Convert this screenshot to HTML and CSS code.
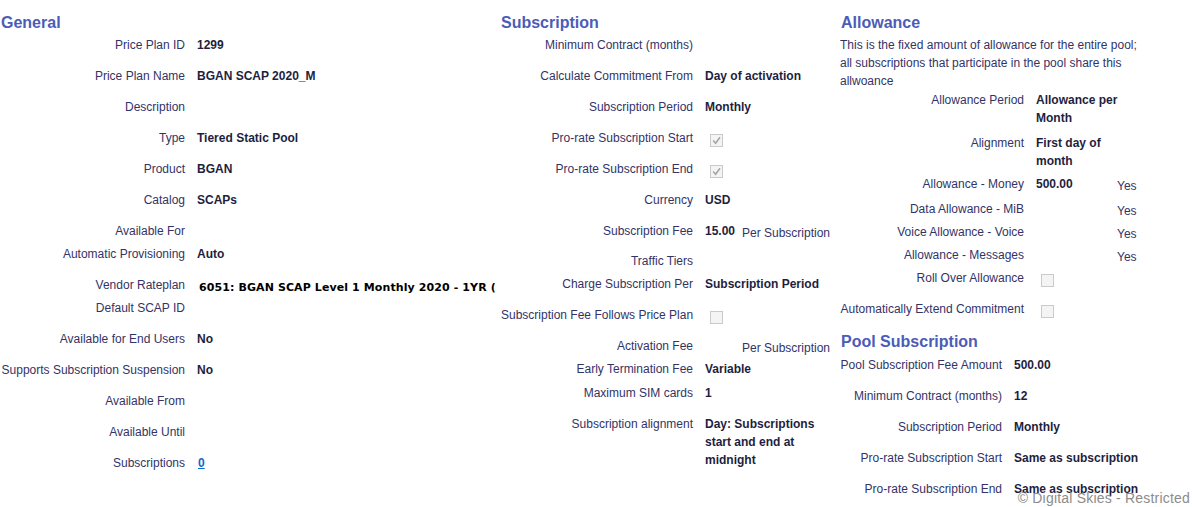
FILE: index.html
```html
<!DOCTYPE html>
<html>
<head>
<meta charset="utf-8">
<link rel="stylesheet" href="styles.css">
</head>
<body>
<div class="page">
  <section class="col col1">
    <h2 class="head">General</h2>
    <div class="row"><span class="lbl">Price Plan ID</span><span class="val">1299</span></div>
    <div class="row"><span class="lbl">Price Plan Name</span><span class="val">BGAN SCAP 2020_M</span></div>
    <div class="row"><span class="lbl">Description</span><span class="val"></span></div>
    <div class="row"><span class="lbl">Type</span><span class="val">Tiered Static Pool</span></div>
    <div class="row"><span class="lbl">Product</span><span class="val">BGAN</span></div>
    <div class="row"><span class="lbl">Catalog</span><span class="val">SCAPs</span></div>
    <div class="row tight"><span class="lbl">Available For</span><span class="val"></span></div>
    <div class="row"><span class="lbl">Automatic Provisioning</span><span class="val">Auto</span></div>
    <div class="row tight"><span class="lbl">Vendor Rateplan</span><span class="val vendor">6051: BGAN SCAP Level 1 Monthly 2020 - 1YR (</span></div>
    <div class="row"><span class="lbl">Default SCAP ID</span><span class="val"></span></div>
    <div class="row"><span class="lbl">Available for End Users</span><span class="val">No</span></div>
    <div class="row"><span class="lbl">Supports Subscription Suspension</span><span class="val">No</span></div>
    <div class="row"><span class="lbl">Available From</span><span class="val"></span></div>
    <div class="row"><span class="lbl">Available Until</span><span class="val"></span></div>
    <div class="row"><span class="lbl">Subscriptions</span><span class="val"><a class="link" href="#">0</a></span></div>
  </section>

  <section class="col col2">
    <h2 class="head">Subscription</h2>
    <div class="row"><span class="lbl">Minimum Contract (months)</span><span class="val"></span></div>
    <div class="row"><span class="lbl">Calculate Commitment From</span><span class="val">Day of activation</span></div>
    <div class="row"><span class="lbl">Subscription Period</span><span class="val">Monthly</span></div>
    <div class="row"><span class="lbl">Pro-rate Subscription Start</span><span class="val"><svg class="cb" width="13" height="13" viewBox="0 0 13 13"><rect x=".5" y=".5" width="12" height="12" fill="#f4f4f4" stroke="#cacaca"/><path d="M3.2 6.6l2.4 2.6L10 3.2" stroke="#a2a2a2" stroke-width="1.5" fill="none"/></svg></span></div>
    <div class="row"><span class="lbl">Pro-rate Subscription End</span><span class="val"><svg class="cb" width="13" height="13" viewBox="0 0 13 13"><rect x=".5" y=".5" width="12" height="12" fill="#f4f4f4" stroke="#cacaca"/><path d="M3.2 6.6l2.4 2.6L10 3.2" stroke="#a2a2a2" stroke-width="1.5" fill="none"/></svg></span></div>
    <div class="row"><span class="lbl">Currency</span><span class="val">USD</span></div>
    <div class="row m12"><span class="lbl">Subscription Fee</span><span class="val"><span class="amt">15.00</span><span class="unit">Per Subscription</span></span></div>
    <div class="row tight"><span class="lbl">Traffic Tiers</span><span class="val"></span></div>
    <div class="row"><span class="lbl">Charge Subscription Per</span><span class="val">Subscription Period</span></div>
    <div class="row"><span class="lbl">Subscription Fee Follows Price Plan</span><span class="val"><svg class="cb" width="13" height="13" viewBox="0 0 13 13"><rect x=".5" y=".5" width="12" height="12" fill="#f4f4f4" stroke="#cacaca"/></svg></span></div>
    <div class="row tight"><span class="lbl">Activation Fee</span><span class="val"><span class="amt"></span><span class="unit">Per Subscription</span></span></div>
    <div class="row m6"><span class="lbl">Early Termination Fee</span><span class="val">Variable</span></div>
    <div class="row"><span class="lbl">Maximum SIM cards</span><span class="val">1</span></div>
    <div class="row"><span class="lbl">Subscription alignment</span><span class="val wrap">Day: Subscriptions start and end at midnight</span></div>
  </section>

  <section class="col col3">
    <h2 class="head">Allowance</h2>
    <p class="desc">This is the fixed amount of allowance for the entire pool; all subscriptions that participate in the pool share this allwoance</p>
    <div class="row a m7"><span class="lbl">Allowance Period</span><span class="val">Allowance per Month</span></div>
    <div class="row a m5"><span class="lbl">Alignment</span><span class="val">First day of month</span></div>
    <div class="row ay m7"><span class="lbl">Allowance - Money</span><span class="val">500.00</span><span class="yes">Yes</span></div>
    <div class="row ay tight"><span class="lbl">Data Allowance - MiB</span><span class="val"></span><span class="yes">Yes</span></div>
    <div class="row ay tight"><span class="lbl">Voice Allowance - Voice</span><span class="val"></span><span class="yes">Yes</span></div>
    <div class="row ay tight"><span class="lbl">Allowance - Messages</span><span class="val"></span><span class="yes">Yes</span></div>
    <div class="row a"><span class="lbl">Roll Over Allowance</span><span class="val"><svg class="cb" width="13" height="13" viewBox="0 0 13 13"><rect x=".5" y=".5" width="12" height="12" fill="#f4f4f4" stroke="#cacaca"/></svg></span></div>
    <div class="row a"><span class="lbl">Automatically Extend Commitment</span><span class="val"><svg class="cb" width="13" height="13" viewBox="0 0 13 13"><rect x=".5" y=".5" width="12" height="12" fill="#f4f4f4" stroke="#cacaca"/></svg></span></div>
    <h2 class="head pool">Pool Subscription</h2>
    <div class="row p"><span class="lbl">Pool Subscription Fee Amount</span><span class="val">500.00</span></div>
    <div class="row p"><span class="lbl">Minimum Contract (months)</span><span class="val">12</span></div>
    <div class="row p"><span class="lbl">Subscription Period</span><span class="val">Monthly</span></div>
    <div class="row p"><span class="lbl">Pro-rate Subscription Start</span><span class="val">Same as subscription</span></div>
    <div class="row p"><span class="lbl">Pro-rate Subscription End</span><span class="val">Same as subscription</span></div>
  </section>
</div>
<div class="footer">© Digital Skies - Restricted</div>
</body>
</html>
```

FILE: styles.css
```css
html, body {
  margin: 0;
  padding: 0;
  background: #ffffff;
}
body {
  font-family: "Liberation Sans", Arial, sans-serif;
  font-size: 12px;
  line-height: 18px;
  color: #333366;
  height: 507px;
  overflow: hidden;
}
.page {
  display: grid;
  grid-template-columns: 495px 345px 1fr;
  padding-top: 14px;
}
.col {
  min-width: 0;
}
.col1 {
  overflow: hidden;
}
.col2 {
  padding-left: 6px;
}
.head {
  margin: 0 0 4px 0;
  font-size: 16px;
  line-height: 18px;
  font-weight: bold;
  color: #4b5cb8;
  padding-left: 1px;
}
.col2 .head {
  padding-left: 0;
}
.head.pool {
  margin-top: 15px;
  margin-bottom: 5px;
}
.row {
  display: grid;
  column-gap: 12px;
  margin-bottom: 13px;
  align-items: start;
}
.row.tight {
  margin-bottom: 5px;
}
.row.m12 {
  margin-bottom: 12px;
}
.row.m7 {
  margin-bottom: 7px;
}
.row.m6 {
  margin-bottom: 6px;
}
.row.m5 {
  margin-bottom: 5px;
}
.col1 .row {
  grid-template-columns: 185px 1fr;
}
.col2 .row {
  grid-template-columns: 192px 1fr;
}
.col3 .row.a {
  grid-template-columns: 184px 96px;
}
.col3 .row.ay {
  grid-template-columns: 184px 69px auto;
}
.col3 .row.p {
  grid-template-columns: 162px 1fr;
}
.lbl {
  text-align: right;
  color: #333366;
  white-space: nowrap;
}
.val {
  font-weight: bold;
  color: #1e1e3e;
  min-width: 0;
}
.col1 .val, .col3 .row.p .val {
  white-space: nowrap;
}
.vendor {
  font-family: "DejaVu Sans", Verdana, sans-serif;
  font-size: 11px;
  letter-spacing: 0.1px;
  color: #000000;
  padding-left: 2px;
  position: relative;
  top: 3px;
  line-height: 18px;
}
.wrap {
  max-width: 125px;
}
.amt {
  display: inline-block;
  width: 37px;
}
.unit {
  font-weight: normal;
  color: #333366;
  position: relative;
  top: 2px;
}
.yes {
  color: #333366;
  position: relative;
  top: 2px;
}
.cb {
  display: block;
  margin: 5px 0 0 5px;
  height: 13px;
}
.link {
  color: #0b6ad0;
  text-decoration: underline;
  padding-left: 1px;
}
.desc {
  margin: 0 0 1px 0;
  max-width: 305px;
  color: #333366;
}
.footer {
  position: absolute;
  right: 2px;
  bottom: 1px;
  font-family: "Liberation Sans", Arial, sans-serif;
  font-size: 14px;
  letter-spacing: 0.2px;
  line-height: 16px;
  color: #8c8c8c;
}
```
